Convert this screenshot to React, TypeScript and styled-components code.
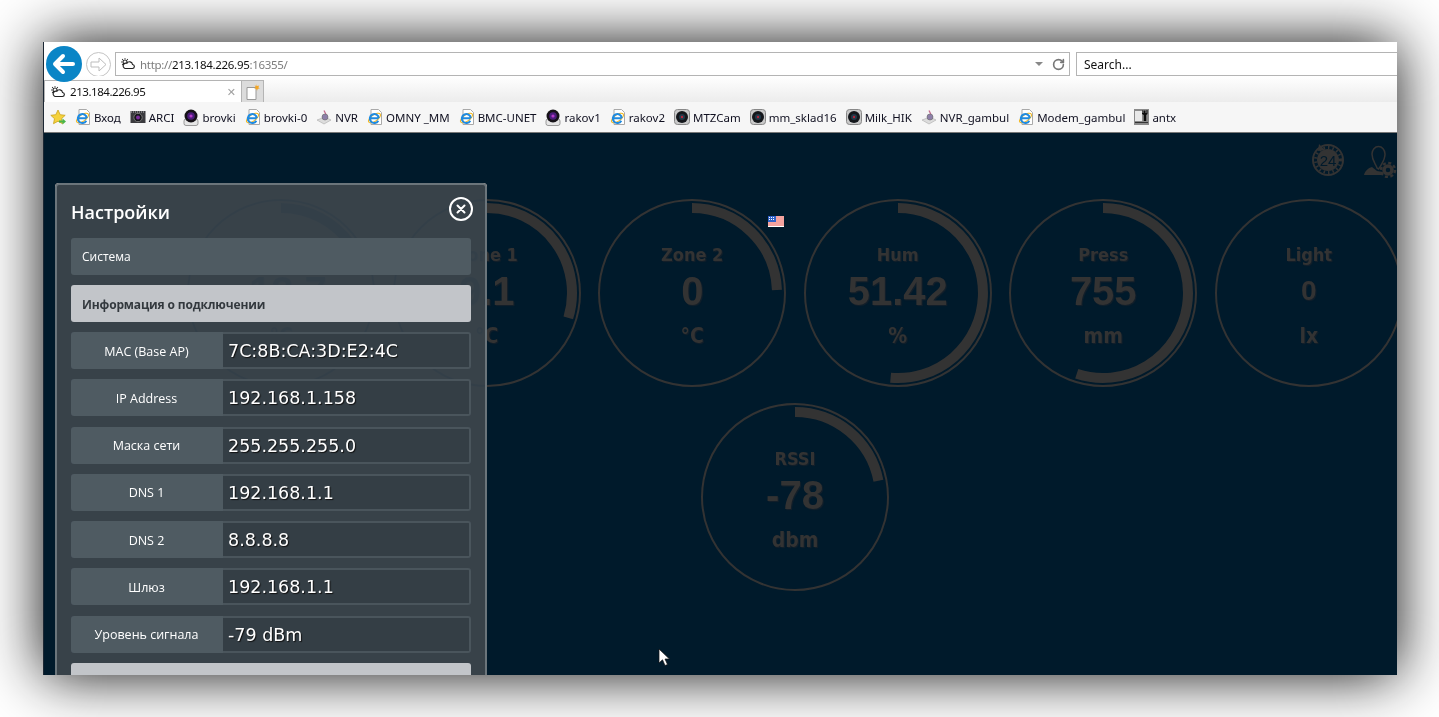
import React from 'react';
import styled, { createGlobalStyle } from 'styled-components';
import { RotateCw } from 'lucide-react';

const GlobalStyle = createGlobalStyle`
  html, body {
    margin: 0;
    height: 100%;
    background: #fff;
    overflow: hidden;
  }
`;

type IconKind = 'star' | 'ie' | 'arci' | 'lens' | 'nvr' | 'cam' | 'tool';

interface Bookmark {
  icon: IconKind;
  label: string;
}

interface GaugeData {
  title: string;
  value: string;
  unit: string;
  angle: number;
  small?: boolean;
}

const bookmarks: Bookmark[] = [
  { icon: 'ie', label: 'Вход' },
  { icon: 'arci', label: 'ARCI' },
  { icon: 'lens', label: 'brovki' },
  { icon: 'ie', label: 'brovki-0' },
  { icon: 'nvr', label: 'NVR' },
  { icon: 'ie', label: 'OMNY _MM' },
  { icon: 'ie', label: 'BMC-UNET' },
  { icon: 'lens', label: 'rakov1' },
  { icon: 'ie', label: 'rakov2' },
  { icon: 'cam', label: 'MTZCam' },
  { icon: 'cam', label: 'mm_sklad16' },
  { icon: 'cam', label: 'Milk_HIK' },
  { icon: 'nvr', label: 'NVR_gambul' },
  { icon: 'ie', label: 'Modem_gambul' },
  { icon: 'tool', label: 'antx' },
];

const gauges: GaugeData[] = [
  { title: 'Camera', value: '-13.7', unit: '°C', angle: 55 },
  { title: 'Zone 1', value: '9.1', unit: '°C', angle: 107 },
  { title: 'Zone 2', value: '0', unit: '°C', angle: 88 },
  { title: 'Hum', value: '51.42', unit: '%', angle: 185 },
  { title: 'Press', value: '755', unit: 'mm', angle: 198 },
  { title: 'Light', value: '0', unit: 'lx', angle: 0, small: true },
  { title: 'RSSI', value: '-78', unit: 'dbm', angle: 79 },
];

const connectionInfo = [
  ['MAC (Base AP)', '7C:8B:CA:3D:E2:4C'],
  ['IP Address', '192.168.1.158'],
  ['Маска сети', '255.255.255.0'],
  ['DNS 1', '192.168.1.1'],
  ['DNS 2', '8.8.8.8'],
  ['Шлюз', '192.168.1.1'],
  ['Уровень сигнала', '-79 dBm'],
];

// arc from 12 o'clock, clockwise
const arcPath = (angle: number) => {
  const r = 85;
  const rad = (angle * Math.PI) / 180;
  const x = 94 + r * Math.sin(rad);
  const y = 94 - r * Math.cos(rad);
  return `M94 9 A${r} ${r} 0 ${angle > 180 ? 1 : 0} 1 ${x.toFixed(2)} ${y.toFixed(2)}`;
};

const SiteIcon = () => (
  <svg width="14" height="12" viewBox="0 0 14 12" fill="none" stroke="#222" strokeWidth="1.1">
    <circle cx="4" cy="4" r="2" />
    <path d="M4 0v.8M0 4h.8M1.2 1.2l.6.6M6.8 1.2l-.6.6M1.2 6.8l.6-.6" />
    <path d="M4 10.5h7.2a2 2 0 0 0 .3-4 3 3 0 0 0-5.6-1.2A2.6 2.6 0 0 0 4 10.5z" fill="#fff" />
  </svg>
);

const BookmarkIcon = ({ kind }: { kind: IconKind }) => {
  if (kind === 'star') {
    return (
      <svg width="17" height="17" viewBox="0 0 17 17">
        <path d="M8 1l2.2 4.7 5 .6-3.7 3.4 1 5-4.5-2.5L3.500 14.700l1-5L.8 6.300l5-.6z" fill="#f5d23c" stroke="#c9a21c" strokeWidth=".8" />
        <path d="M9 11.500h3.500V9.500l3.500 3-3.500 3v-2H9z" fill="#49b648" />
      </svg>
    );
  }
  if (kind === 'ie') {
    return (
      <svg width="16" height="16" viewBox="0 0 16 16" fill="none">
        <path d="M4 .5h7.500l3 3v12H4z" fill="#fff" stroke="#a9a9a9" />
        <ellipse cx="7.500" cy="9" rx="7" ry="3.200" transform="rotate(-35 7.500 9)" stroke="#f3b81f" strokeWidth="1.100" />
        <path d="M3.800 9.200h7.800M11.300 11.700A4.500 4.500 0 1 1 11.800 9.200" stroke="#1f8ae0" strokeWidth="2" />
      </svg>
    );
  }
  if (kind === 'arci') {
    return (
      <svg width="16" height="14" viewBox="0 0 16 14">
        <rect x=".5" y="1" width="15" height="12" fill="#3a3a3e" />
        <path d="M1 2h14" stroke="#bbb" strokeDasharray="1 1" />
        <circle cx="8" cy="7.500" r="4.200" fill="#16161a" stroke="#777" />
        <circle cx="8" cy="7.500" r="2" fill="#7a2d9c" />
      </svg>
    );
  }
  if (kind === 'lens') {
    return (
      <svg width="16" height="17" viewBox="0 0 16 17">
        <rect x="1" y="10" width="14" height="6.500" rx="2" fill="#e6e6e6" stroke="#777" strokeWidth=".7" />
        <circle cx="8" cy="7" r="6.500" fill="#161218" />
        <circle cx="8" cy="7" r="3.800" fill="#4a1d7a" />
        <circle cx="8" cy="7" r="1.600" fill="#b53ac9" />
      </svg>
    );
  }
  if (kind === 'nvr') {
    return (
      <svg width="16" height="16" viewBox="0 0 16 16">
        <path d="M1 11l8-3 6 3-7 4z" fill="#dcdcdc" stroke="#aaa" strokeWidth=".6" />
        <path d="M8 1.500l2 4" stroke="#c56a8e" strokeWidth="1.200" />
        <circle cx="9" cy="8" r="3" fill="#8d7fa8" stroke="#666" strokeWidth=".6" />
      </svg>
    );
  }
  if (kind === 'cam') {
    return (
      <svg width="16" height="16" viewBox="0 0 16 16">
        <rect x=".5" y=".5" width="15" height="15" rx="3" fill="#c9c9c9" stroke="#888" />
        <circle cx="8" cy="8" r="6" fill="#14171b" />
        <circle cx="8" cy="8" r="3" fill="#203a4a" />
        <circle cx="8" cy="8" r="1.200" fill="#b3263a" />
      </svg>
    );
  }
  return (
    <svg width="15" height="16" viewBox="0 0 15 16">
      <rect width="15" height="16" fill="#8a8a8a" />
      <path d="M1 2h7v10H1z" fill="#e8e8e8" />
      <path d="M8.500 1v3h1V1.500h2V4h1V1h1v4l-1.300 1v6h-2.400V6L8 5V1z" fill="#0c0c0c" />
      <path d="M1 13.500h13" stroke="#333" />
    </svg>
  );
};

const App: React.FC = () => (
  <Page>
    <GlobalStyle />
    <BrowserWindow>
      <BackButton>
        <svg width="26" height="22" viewBox="0 0 26 22" fill="none" stroke="#fff" strokeWidth="4" strokeLinecap="round" strokeLinejoin="round">
          <path d="M22 11H4M12 3l-8 8 8 8" />
        </svg>
      </BackButton>
      <AddressRow>
        <ForwardButton>
          <svg width="17" height="15" viewBox="0 0 17 15" fill="none" stroke="#bdbdbd" strokeWidth="1">
            <path d="M1 5h8V1l7 6.500L9 14v-4H1z" />
          </svg>
        </ForwardButton>
        <AddressBox>
          <SiteIcon />
          <Url>
            http://<b>213.184.226.95</b>:16355/
          </Url>
          <AddressTools>
            <DropArrow />
            <RotateCw size={13} color="#777" strokeWidth={3} />
          </AddressTools>
        </AddressBox>
        <SearchBox>Search...</SearchBox>
      </AddressRow>
      <TabRow>
        <Tab>
          <SiteIcon />
          <TabTitle>213.184.226.95</TabTitle>
          <TabClose>✕</TabClose>
        </Tab>
        <NewTab>
          <svg width="14" height="16" viewBox="0 0 14 16">
            <path d="M1 3.500h9v12H1z" fill="#fff" stroke="#999" />
            <path d="M10.500 0l.8 2 2-.6-1 1.800 1.500 1.300-2 .2-.8 2-.8-2-2-.2 1.500-1.300-1-1.800 2 .6z" fill="#f5a623" />
          </svg>
        </NewTab>
      </TabRow>
      <FavoritesBar>
        <FavStar>
          <BookmarkIcon kind="star" />
        </FavStar>
        {bookmarks.map((b, i) => (
          <FavItem key={i}>
            <BookmarkIcon kind={b.icon} />
            <span>{b.label}</span>
          </FavItem>
        ))}
      </FavoritesBar>
      <Dashboard>
        <TopIcons>
          <svg width="36" height="36" viewBox="0 0 36 36" fill="none">
            <circle cx="18" cy="18" r="15" stroke="#333" strokeWidth="2" />
            <circle cx="18" cy="18" r="12.500" stroke="#333" strokeWidth="3" strokeDasharray="1.500 3" />
            <circle cx="18" cy="18" r="11" fill="#333" />
            <path d="M9 2l-1 7 7-1z" fill="#333" />
            <ClockText x="18" y="23.500" textAnchor="middle">24</ClockText>
          </svg>
          <svg width="36" height="36" viewBox="0 0 36 36" fill="none">
            <path d="M16 26c-1-4-5-7-5-14a6.500 7.500 0 0 1 13 0c0 6-3 9-5 13l-1.500 2z" stroke="#333" strokeWidth="1.500" />
            <path d="M3 33c1-4 4-7 8-8l5 4 6 1-1 3z" fill="#333" />
            <circle cx="27" cy="28" r="4" stroke="#333" strokeWidth="3.500" />
            <circle cx="27" cy="28" r="7" stroke="#333" strokeWidth="2.500" strokeDasharray="3 2.500" />
          </svg>
        </TopIcons>
        <GaugeWrap>
          {gauges.map((g) => (
            <Gauge key={g.title}>
              <GaugeRing width="188" height="188" viewBox="0 0 188 188" fill="none">
                <circle cx="94" cy="94" r="93" stroke="#333" strokeWidth="2" />
                {g.angle > 0 && <path d={arcPath(g.angle)} stroke="#333" strokeWidth="10" />}
              </GaugeRing>
              <GaugeTitle>{g.title}</GaugeTitle>
              <GaugeValue $small={g.small}>{g.value}</GaugeValue>
              <GaugeUnit>{g.unit}</GaugeUnit>
            </Gauge>
          ))}
        </GaugeWrap>
        <Flag>
          <svg width="16" height="11" viewBox="0 0 16 11">
            <rect width="16" height="11" fill="#fff" />
            <path d="M0 1h16M0 3h16M0 5h16M0 7h16M0 9h16" stroke="#e8473f" strokeWidth="1" />
            <rect width="8" height="6" fill="#2f62c9" />
            <path d="M1 1.500h6M1 3.500h6" stroke="#fff" strokeDasharray="1 1" />
          </svg>
        </Flag>
        <Pointer>
          <svg width="12" height="19" viewBox="0 0 12 19">
            <path d="M1 1v14l3.500-3.200L7 17.500l2.500-1-2.500-5.500h4.500z" fill="#fff" stroke="#111" strokeWidth=".7" />
          </svg>
        </Pointer>
      </Dashboard>
      <Modal>
        <ModalHead>
          <ModalTitle>Настройки</ModalTitle>
          <CloseButton>
            <svg width="10" height="10" viewBox="0 0 10 10" stroke="#fff" strokeWidth="2" strokeLinecap="round">
              <path d="M1.500 1.500l7 7M8.500 1.500l-7 7" />
            </svg>
          </CloseButton>
        </ModalHead>
        <SectionBar>Система</SectionBar>
        <SectionBar $active>Информация о подключении</SectionBar>
        {connectionInfo.map(([label, value]) => (
          <InfoRow key={label}>
            <InfoLabel>{label}</InfoLabel>
            <InfoValue>{value}</InfoValue>
          </InfoRow>
        ))}
        <SectionBar $active>&nbsp;</SectionBar>
      </Modal>
    </BrowserWindow>
  </Page>
);

export default App;

const chromeFont = `"Noto Sans", "DejaVu Sans", sans-serif`;

const Page = styled.div`
  box-sizing: border-box;
  width: 1439px;
  height: 717px;
  padding: 42px 42px 42px 43px;
  background: #fff;
`;

const BrowserWindow = styled.div`
  position: relative;
  width: 1354px;
  height: 633px;
  display: flex;
  flex-direction: column;
  overflow: hidden;
  background: #fff;
  box-shadow: 0 0 56px rgba(0, 0, 0, 0.95);
  font-family: ${chromeFont};
  color: #101020;

  &::before {
    content: '';
    position: absolute;
    left: 0;
    top: 0;
    bottom: 0;
    z-index: 5;
    width: 1px;
    background: #1c2733;
  }
`;

const BackButton = styled.div`
  position: absolute;
  left: 3px;
  top: 4px;
  z-index: 2;
  width: 36px;
  height: 36px;
  border-radius: 50%;
  background: #0a85c6;
  display: flex;
  align-items: center;
  justify-content: center;
`;

const AddressRow = styled.div`
  flex: none;
  height: 34px;
  width: 1700px;
  box-sizing: border-box;
  padding: 10px 0 0 43px;
  display: flex;
  background: #fff;
`;

const ForwardButton = styled.div`
  width: 25px;
  height: 25px;
  margin-right: 4px;
  box-sizing: border-box;
  border: 1px solid #c4c4c4;
  border-radius: 50%;
  display: flex;
  align-items: center;
  justify-content: center;
`;

const AddressBox = styled.div`
  width: 955px;
  height: 24px;
  box-sizing: border-box;
  border: 1px solid #b4b4b4;
  padding: 0 4px 0 5px;
  display: flex;
  align-items: center;
  gap: 5px;
`;

const Url = styled.div`
  flex: 1;
  font-size: 11.5px;
  letter-spacing: -0.3px;
  color: #7c7c7c;

  b {
    font-weight: 400;
    color: #111;
  }
`;

const AddressTools = styled.div`
  display: flex;
  align-items: center;
  gap: 9px;
`;

const DropArrow = styled.div`
  width: 0;
  height: 0;
  border-left: 4px solid transparent;
  border-right: 4px solid transparent;
  border-top: 4px solid #888;
`;

const SearchBox = styled.div`
  margin-left: 6px;
  width: 500px;
  height: 24px;
  box-sizing: border-box;
  border: 1px solid #b4b4b4;
  padding: 0 7px;
  font-size: 12px;
  line-height: 23px;
  color: #111;
`;

const TabRow = styled.div`
  flex: none;
  height: 26px;
  box-sizing: border-box;
  padding: 4px 0 0 1px;
  display: flex;
  align-items: stretch;
  background: linear-gradient(#fff, #ececec);
`;

const Tab = styled.div`
  width: 198px;
  box-sizing: border-box;
  padding: 0 3px 0 6px;
  background: #fff;
  border: 1px solid #b4b4b4;
  border-bottom: none;
  display: flex;
  align-items: center;
  gap: 5px;
`;

const TabTitle = styled.span`
  flex: 1;
  font-size: 11.5px;
  letter-spacing: -0.45px;
  color: #111;
`;

const TabClose = styled.span`
  font-size: 11px;
  color: #a0a0a0;
  font-weight: 700;
  padding-right: 2px;
`;

const NewTab = styled.div`
  width: 22px;
  box-sizing: border-box;
  background: #dcdcdc;
  border: 1px solid #b4b4b4;
  border-left: none;
  border-bottom: none;
  display: flex;
  align-items: center;
  justify-content: center;
`;

const FavoritesBar = styled.div`
  flex: none;
  height: 31px;
  box-sizing: border-box;
  padding: 0 0 0 7px;
  display: flex;
  align-items: center;
  gap: 9px;
  background: #f6f6f6;
  border-bottom: 1px solid #777;
  font-size: 11.5px;
  white-space: nowrap;
`;

const FavStar = styled.div`
  display: flex;
  margin-right: -1px;
`;

const FavItem = styled.div`
  display: flex;
  align-items: center;
  gap: 3px;
  flex: none;
`;

const Dashboard = styled.div`
  position: relative;
  flex: 1;
  width: 1504px;
  background: #001a2b;
  font-family: "Liberation Sans", sans-serif;
`;

const TopIcons = styled.div`
  width: 1354px;
  height: 58px;
  box-sizing: border-box;
  padding: 9px 0 0 0;
  display: flex;
  justify-content: flex-end;
  gap: 15px;
`;

const ClockText = styled.text`
  font-family: "Liberation Sans", sans-serif;
  font-size: 15px;
  font-weight: 400;
  fill: #001a2b;
`;

const GaugeWrap = styled.div`
  width: 1236px;
  margin: 0 auto;
  display: flex;
  flex-wrap: wrap;
  justify-content: center;
`;

const Gauge = styled.div`
  position: relative;
  width: 188px;
  height: 188px;
  margin: 8px 8.75px;
  box-sizing: border-box;
  padding-top: 44px;
  display: flex;
  flex-direction: column;
  align-items: center;
  color: #333;
  font-weight: 700;
  text-shadow: 1px 1px 1px #15202a;
`;

const GaugeRing = styled.svg`
  position: absolute;
  left: 0;
  top: 0;
`;

const GaugeTitle = styled.div`
  font-family: "DejaVu Sans", sans-serif;
  font-stretch: condensed;
  font-size: 18px;
  line-height: 24px;
`;

const GaugeValue = styled.div<{ $small?: boolean }>`
  font-size: ${(p) => (p.$small ? '28px' : '40px')};
  line-height: 48px;
`;

const GaugeUnit = styled.div`
  margin-top: 9px;
  font-family: "DejaVu Sans", sans-serif;
  font-stretch: condensed;
  font-size: 21px;
  line-height: 24px;
`;

const Flag = styled.div`
  position: absolute;
  left: 725px;
  top: 83px;
  display: flex;
`;

const Pointer = styled.div`
  position: absolute;
  left: 615px;
  top: 515px;
  display: flex;
`;

const Modal = styled.div`
  position: absolute;
  left: 12px;
  top: 141px;
  z-index: 3;
  width: 432px;
  box-sizing: border-box;
  padding: 0 14px 16px;
  background: rgba(34, 48, 58, 0.9);
  backdrop-filter: invert(1);
  border: 2px solid #6b757b;
  border-radius: 4px;
  font-family: "Open Sans", "Noto Sans", sans-serif;
  color: #fff;
`;

const ModalHead = styled.div`
  height: 53px;
  display: flex;
  align-items: center;
  justify-content: space-between;
`;

const ModalTitle = styled.div`
  font-size: 18px;
  font-weight: 600;
`;

const CloseButton = styled.div`
  width: 24px;
  height: 24px;
  margin-right: -2px;
  margin-bottom: 6px;
  box-sizing: border-box;
  border: 2px solid #fff;
  border-radius: 50%;
  display: flex;
  align-items: center;
  justify-content: center;
`;

const SectionBar = styled.div<{ $active?: boolean }>`
  height: 37px;
  margin-bottom: 10px;
  box-sizing: border-box;
  padding: 0 11px;
  border-radius: 3px;
  line-height: ${(p) => (p.$active ? 39 : 37)}px;
  font-size: 12px;
  letter-spacing: ${(p) => (p.$active ? '-0.15px' : 0)};
  font-weight: ${(p) => (p.$active ? 700 : 400)};
  color: ${(p) => (p.$active ? '#33393e' : '#fff')};
  background: ${(p) => (p.$active ? 'rgba(200, 203, 206, 0.96)' : 'rgba(82, 94, 101, 0.9)')};
`;

const InfoRow = styled.div`
  height: 37px;
  margin-bottom: 10.3px;
  display: flex;
`;

const InfoLabel = styled.div`
  flex: none;
  width: 152px;
  box-sizing: border-box;
  padding: 1px 1px 0 0;
  background: #4f5b62;
  border-radius: 3px 0 0 3px;
  display: flex;
  align-items: center;
  justify-content: center;
  font-size: 12.5px;
`;

const InfoValue = styled.div`
  flex: 1;
  box-sizing: border-box;
  padding-left: 5px;
  background: #343e45;
  border: 2px solid #4a555c;
  border-left: none;
  border-radius: 0 3px 3px 0;
  font-family: "DejaVu Sans", sans-serif;
  font-size: 17.5px;
  line-height: 35px;
  text-shadow: 1px 1px 1px #111;
`;
